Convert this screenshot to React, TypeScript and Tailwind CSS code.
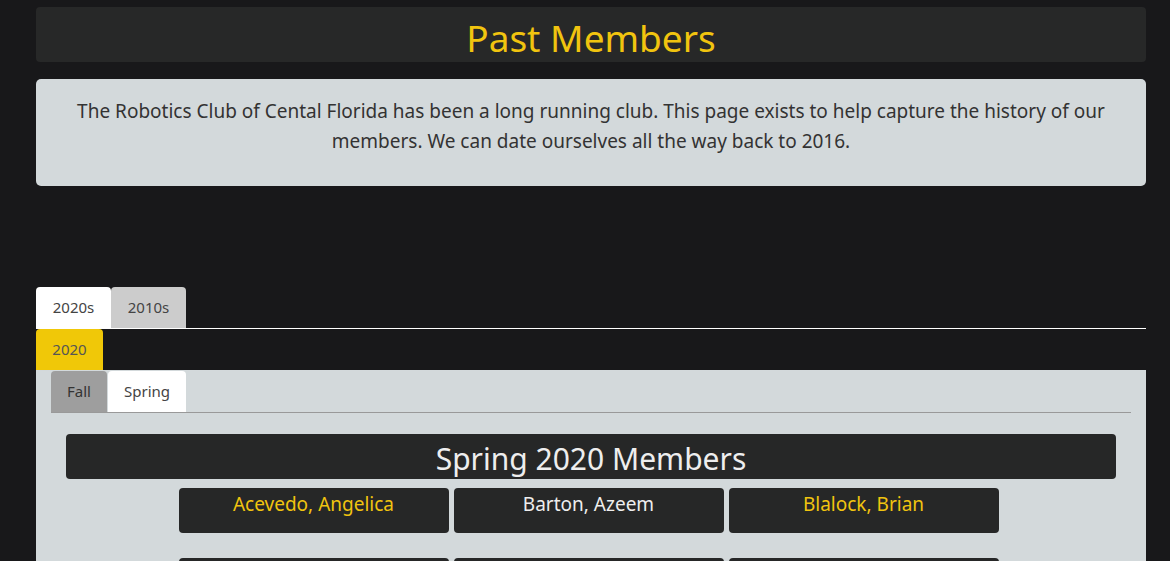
import React from 'react';

const members = [
  { name: 'Acevedo, Angelica', gold: true },
  { name: 'Barton, Azeem', gold: false },
  { name: 'Blalock, Brian', gold: true },
  { name: 'Bowers, Caleb', gold: false },
  { name: 'Carter, Daniel', gold: true },
  { name: 'Diaz, Elena', gold: false },
];

export default function App() {
  const rows: typeof members[] = [];
  for (let i = 0; i < members.length; i += 3) rows.push(members.slice(i, i + 3));

  return (
    <div className="min-h-screen bg-[#18181a] font-['Noto_Sans',sans-serif]">
      <div className="ml-[36px] w-[1110px] pt-[7px]">
        <div className="h-[55px] rounded-[4px] bg-[#272828] text-center text-[37px] leading-[62px] text-[#f1c40f]">
          Past Members
        </div>

        <div className="mt-[17px] h-[107px] rounded-[5px] bg-[#d3d9db] px-7 pt-[17px] text-center text-[19px] leading-[30px] text-[#333]">
          The Robotics Club of Cental Florida has been a long running club. This page exists to help capture the history of our members. We can date ourselves all the way back to 2016.
        </div>

        <div className="mt-[101px] flex border-b border-white">
          <div className="flex h-[41px] w-[75px] items-center justify-center rounded-t-[4px] bg-white text-[15px] text-[#444]">2020s</div>
          <div className="flex h-[41px] w-[75px] items-center justify-center rounded-t-[4px] bg-[#cccccc] text-[15px] text-[#444]">2010s</div>
        </div>

        <div className="flex h-[41px] w-[67px] items-center justify-center rounded-t-[4px] bg-[#f0c808] text-[15px] text-[#555]">2020</div>

        <div className="bg-[#d3d9db] px-[15px] pt-px pb-10">
          <div className="flex border-b border-[#999]">
            <div className="flex h-[41px] w-[56px] items-center justify-center rounded-t-[4px] bg-[#9e9e9e] text-[15px] text-[#333]">Fall</div>
            <div className="ml-px flex h-[41px] w-[78px] items-center justify-center rounded-t-[4px] bg-white text-[15px] text-[#444]">Spring</div>
          </div>

          <div className="mx-[15px] mt-[21px] h-[45px] rounded-[4px] bg-[#262727] text-center text-[30px] leading-[50px] text-[#eeeeee]">
            Spring 2020 Members
          </div>

          <div className="mt-[9px] flex flex-col gap-[25px] pr-[5px]">
            {rows.map((row, i) => (
              <div key={i} className="flex justify-center gap-[5px]">
                {row.map((m) => (
                  <div
                    key={m.name}
                    className={`h-[45px] w-[270px] rounded-[4px] bg-[#262727] pt-[4px] text-center text-[19px] leading-[24px] ${m.gold ? 'text-[#f1c40f]' : 'text-[#eeeeee]'}`}
                  >
                    {m.name}
                  </div>
                ))}
              </div>
            ))}
          </div>
        </div>
      </div>
    </div>
  );
}
